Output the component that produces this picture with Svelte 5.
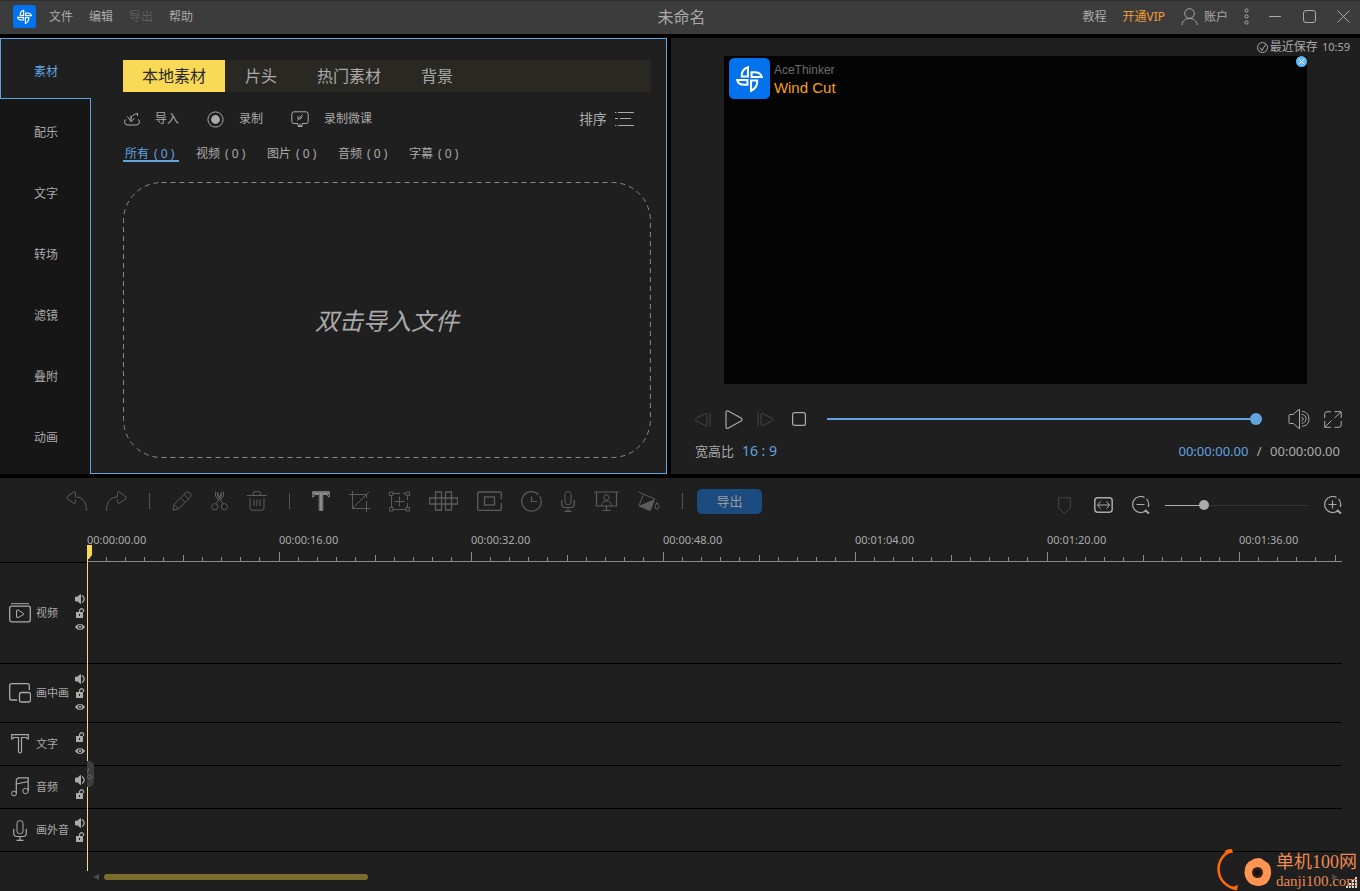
<script lang="ts">
  type Icon = { w: number; h: number; body: string };

  // Line icons, one unit per pixel. They take their colour from the text around them.
  const icons: Record<string, Icon> = {
    user: { w: 17, h: 17, body: '<circle cx="8.5" cy="5.5" r="4.8"/><path d="M.8 17C1.5 12.600 4.500 10.500 8.500 10.500S15.500 12.600 16.200 17"/>' },
    dots: { w: 5, h: 17, body: '<circle cx="2.500" cy="2.500" r="1.600"/><circle cx="2.500" cy="8.500" r="1.600"/><circle cx="2.500" cy="14.500" r="1.600"/>' },
    min: { w: 13, h: 13, body: '<path d="M0 6.500H12"/>' },
    max: { w: 13, h: 13, body: '<rect x=".5" y=".5" width="12" height="12" rx="2.500"/>' },
    close: { w: 13, h: 13, body: '<path d="M.5 .5L12.500 12.500M12.500 .5L.5 12.500"/>' },
    import: { w: 16, h: 14, body: '<path d="M1.500 7.500Q0 9 .8 11Q1 13 4 13H12Q15 13 15.200 11Q16 9 14.500 7.500"/><path d="M3.500 4.500L7 9.500L10.500 6.500M7 9.500C6.500 6 8 2 14 1.500M7 3.500V7M13.500 1.500V4"/>' },
    record: { w: 17, h: 17, body: '<circle cx="8.500" cy="8.500" r="7.600"/><circle cx="8.500" cy="8.500" r="4.400" fill="currentColor" stroke="none"/>' },
    screen: { w: 18, h: 17, body: '<path d="M7 12.500H3Q.8 12.500.8 10.500V3Q.8 .8 3 .8H15Q17.200 .8 17.200 3V10.500Q17.200 12.500 15 12.500H11"/><path d="M11.500 3.500L6.500 9.500M7 5V8M9 8.500L11 5.500M9 12.500V15.500M6 13.500L9 15.500L12 13.500M7 15.500H11.500"/>' },
    list: { w: 19, h: 14, body: '<path d="M3 .5H19M5 6.500H16M3 13.500H19M0 .5H1.500M0 6.500H3M0 13.500H1.500"/>' },
    saved: { w: 11, h: 11, body: '<circle cx="5.500" cy="5.500" r="5"/><path d="M3 5.500L5 8.500L8.500 2.500"/>' },
    prev: { w: 17, h: 15, body: '<path d="M11.500 1.500Q13 1 13 2.500V12.500Q13 14.500 11.500 13.800L1.500 8.500Q.3 7.500 1.500 6.500ZM16 .5V14.500"/>' },
    play: { w: 18, h: 19, body: '<path d="M1 2.500Q1 .3 3.200 1L16 8Q18 9.500 16 11L3.200 18.200Q1 19 1 16.500Z" stroke-width="1.200"/>' },
    next: { w: 17, h: 15, body: '<path d="M5.500 1.500Q4 1 4 2.500V12.500Q4 14.500 5.500 13.800L15.500 8.500Q16.700 7.500 15.500 6.500ZM1 .5V14.500"/>' },
    stop: { w: 14, h: 14, body: '<rect x=".6" y=".6" width="12.800" height="12.800" rx="2" stroke-width="1.200"/>' },
    volume: { w: 22, h: 20, body: '<path d="M1 6.500Q1 5.500 2 5.500H5L10 1.300Q11.500 .3 11.500 2V18Q11.500 19.700 10 18.700L5.500 14.500H2Q1 14.500 1 13.500ZM11.500 0V20"/><path d="M14 2.500C23 2 23.500 18 14 17M13.500 5.500C19.500 5 19.500 14.500 13.500 14.200M13.500 8Q17 10 13.500 12"/>' },
    full: { w: 18, h: 17, body: '<path d="M7 .7H3Q.7 .7.7 3V7M10.500 .7H17.200V7M17.200 10V14Q17.200 16.300 15 16.300H10.500M7 16.300H.7V10M17 1L10.500 7M7.500 9.500L1 16"/>' },
    undo: { w: 21, h: 20, body: '<path d="M9.500 6C16.500 6 20.500 11 20.500 19.500M9.500 5.500V2.500Q9.500 0 7.500 1L1 6Q.2 6.800 1 7.500L7.500 12.200Q9.500 13 9.500 10.500V8.500"/>' },
    redo: { w: 21, h: 20, body: '<path d="M11.500 6C4.500 6 .5 11 .5 19.500M11.500 5.500V2.500Q11.500 0 13.500 1L20 6Q20.800 6.800 20 7.500L13.500 12.200Q11.500 13 11.500 10.500V8.500"/>' },
    pencil: { w: 20, h: 20, body: '<path d="M1 19L2 13.500L13.500 1.800Q15.500 0 17.800 1.800Q20 4 18.500 6L6.500 17.800ZM12 3.500L16.800 8.200M2 13.500L6.500 17.800M9.500 7.500L12.500 10.500"/>' },
    cut: { w: 17, h: 20, body: '<circle cx="3.700" cy="15.700" r="3.100"/><circle cx="13.300" cy="15.700" r="3.100"/><path d="M5 12.800L10.500 5V1L8.500 7M12 12.800L6.500 5V1L8.500 7M4.500 .5V5L7.500 9M12.500 .5V5L9.500 9"/>' },
    trash: { w: 20, h: 20, body: '<path d="M0 4.500H20M6.500 4.500V2Q6.500 .7 8 .7H12Q13.500 .7 13.500 2V4.500M3 7V17Q3 19.200 5 19.200H15Q17 19.200 17 17V7M7 8.500V15M10 8.500V15M13 8.500V15"/>' },
    text: { w: 18, h: 20, body: '<path d="M.7 .7H17.300V6Q15.500 6 15.300 3.500H10.800V19.300H7.200V3.500H2.700Q2.500 6 .7 6Z"/><path d="M9 2V19M1 2.200H17" stroke-width="2"/>' },
    crop: { w: 21, h: 21, body: '<path d="M3.500 0V17.500H21M0 3.500H17.500V7M17.500 10V21M3.500 17.500L20 1"/>' },
    area: { w: 21, h: 21, body: '<path d="M.5 1H4V4.500H.5ZM17 1H20.500V4.500H17ZM.5 16.500H4V20H.5ZM17 16.500H20.500V20H17ZM4 2.500H11M14 2.500H17M2.500 4.500V16.500M4 18.500H17M18.500 4.500V9M18.500 12V16.500M10.500 5.500V15.500M5.500 10.500H15.500"/>' },
    mosaic: { w: 29, h: 20, body: '<path d="M6.500 1H12.500V19H6.500ZM16.500 1H22.500V19H16.500ZM.5 7H28.500V13H.5Z" stroke-width="1.300"/>' },
    frame: { w: 25, h: 20, body: '<path d="M24.300 8V2.500Q24.300 1 23 1H2Q.7 1 .7 2.500V18Q.7 19.300 2 19.300H23Q24.300 19.300 24.300 18V12" stroke-width="1.300"/><rect x="7.500" y="6" width="10" height="8" stroke-width="1.300"/>' },
    clock: { w: 21, h: 21, body: '<path d="M17.500 3.500A9.800 9.800 0 1 0 20.300 10.500Q20.300 7 18.800 5M10.500 5.500V10.500H16" stroke-width="1.200"/>' },
    mic: { w: 14, h: 21, body: '<rect x="4" y=".7" width="6" height="13" rx="2.500"/><path d="M.7 9V13Q.7 16.500 4 16.500H10Q13.300 16.500 13.300 13V9M7 16.500V20.300M3.500 20.300H10.500" stroke-width="1.200"/>' },
    present: { w: 25, h: 20, body: '<path d="M0 1H25M2.500 1V15H22.500V1M12.500 15V19M8.500 19.500H16.500" stroke-width="1.200"/><circle cx="12.500" cy="6.500" r="2.700"/><path d="M7.500 15Q8 10 12.500 10T17.500 15"/>' },
    bucket: { w: 22, h: 20, body: '<path d="M.5 1L17 8M5.500 3.500L.8 15L12 19.500L16.500 8"/><path d="M2 15L16 9L12.500 19Z" fill="currentColor"/><path d="M19 11.500Q16.500 15 17 17Q19 19.500 21 17Q21.500 15 19 11.500Z"/>' },
    marker: { w: 13, h: 17, body: '<path d="M.7 .7H12.300V11.500L6.500 16.300L.7 11.500Z"/>' },
    fit: { w: 19, h: 16, body: '<rect x=".8" y=".8" width="17.400" height="14.400" rx="3" stroke-width="1.500"/><path d="M3.500 8H15.500M6.500 4.500L3.500 8L6.500 11.500M12.500 4.500L15.500 8L12.500 11.500"/>' },
    zoomout: { w: 18, h: 18, body: '<path d="M12.500 1.500A8 8 0 1 0 14.500 14M14.500 2.800Q17.500 6 16.300 11M4.500 8.500H12.500" stroke-width="1.200"/><path d="M13 14L17 17.500" stroke-width="2"/>' },
    zoomin: { w: 18, h: 18, body: '<path d="M12.500 1.500A8 8 0 1 0 14.500 14M14.500 2.800Q17.500 6 16.300 11M4.500 8.500H12.500M8.500 4.500V12.500" stroke-width="1.200"/><path d="M13 14L17 17.500" stroke-width="2"/>' },
    trackVideo: { w: 22, h: 20, body: '<path d="M2 .7H20"/><rect x=".7" y="3.200" width="20.600" height="15.600" rx="2" stroke-width="1.300"/><path d="M7.500 8Q7.500 6.500 9 7L14 10Q15 11 14 12L9 14.500Q7.500 15 7.500 14Z"/>' },
    trackPip: { w: 22, h: 20, body: '<path d="M8 17H2.500Q.7 17 .7 15V2.500Q.7 .7 2.500 .7H18.500Q20.300 .7 20.300 2.500V7" stroke-width="1.300"/><rect x="10.500" y="9.500" width="11" height="9.500" rx="2" stroke-width="1.300"/>' },
    trackText: { w: 18, h: 20, body: '<path d="M.7 .7H17.300V5Q15.500 5 15.500 3.500H10.500V18Q9 20 7.500 18V3.500H2.500Q2.500 5 .7 5Z" stroke-width="1.200"/>' },
    trackAudio: { w: 18, h: 20, body: '<circle cx="3" cy="16.500" r="2.400"/><circle cx="14.500" cy="14" r="2.700"/><path d="M5.300 16.500V3.500Q5.500 1 8 .8H17.200V14M5.300 7L17.200 4.500" stroke-width="1.200"/>' },
    sound: { w: 10, h: 10, body: '<path d="M.5 3H2.500L5.500 .5V9.500L2.500 7H.5Z" fill="currentColor"/><path d="M7 1.500Q11.500 5 7 8.500" stroke-width="1.300"/>' },
    lock: { w: 10, h: 10, body: '<rect x="1" y="4" width="7" height="6" fill="currentColor" stroke="none"/><path d="M4.500 4.500V2.500Q6.500 -.8 8.500 2V4" stroke-width="1.300"/><path d="M4.500 6V8" stroke="#1f1f1f"/>' },
    eye: { w: 10, h: 10, body: '<path d="M0 5C2.500 1 7.500 1 10 5C7.500 9 2.500 9 0 5Z" fill="currentColor" stroke="none"/><circle cx="5" cy="5" r="1.700" fill="currentColor" stroke="#1f1f1f"/>' },
  };

  const sections = ['素材', '配乐', '文字', '转场', '滤镜', '叠附', '动画'];
  const sources = ['本地素材', '片头', '热门素材', '背景'];
  const filters = ['所有', '视频', '图片', '音频', '字幕'];

  const tools = [
    ['undo', '撤销'], ['redo', '重做'], ['|', ''],
    ['pencil', '编辑'], ['cut', '分割'], ['trash', '删除'], ['|', ''],
    ['text', '文字'], ['crop', '裁剪'], ['area', '缩放'], ['mosaic', '马赛克'],
    ['frame', '画中画'], ['clock', '时长'], ['mic', '录音'], ['present', '录制'],
    ['bucket', '颜色'], ['|', ''],
  ];

  const tracks = [
    { name: '视频', icon: 'trackVideo', size: 'tall', marks: ['sound', 'lock', 'eye'] },
    { name: '画中画', icon: 'trackPip', size: 'mid', marks: ['sound', 'lock', 'eye'] },
    { name: '文字', icon: 'trackText', size: '', marks: ['lock', 'eye'] },
    { name: '音频', icon: 'trackAudio', size: '', marks: ['sound', 'lock'] },
    { name: '画外音', icon: 'mic', size: '', marks: ['sound', 'lock'] },
  ];
  const markNames: Record<string, string> = { sound: '静音', lock: '锁定', eye: '显示' };

  // Ruler: a label every 16 seconds, ten ticks between two labels
  const SECTION = 192;
  const labels = ['00:00:00.00', '00:00:16.00', '00:00:32.00', '00:00:48.00', '00:01:04.00', '00:01:20.00', '00:01:36.00'];
  const ticks = Array.from({ length: 200 }, (_, i) => ({
    x: Math.floor((i * SECTION) / 10) + 0.5,
    top: i % 10 === 0 ? 28 : i % 5 === 0 ? 31 : 33,
  }));

  let section = $state(0);
  let source = $state(0);
  let filter = $state(0);
  let position = $state(100);
  let zoom = $state(25);
</script>

{#snippet icon(name: string)}
  {@const i = icons[name]}
  <svg class="icon" width={i.w} height={i.h} viewBox="0 0 {i.w} {i.h}" aria-hidden="true">{@html i.body}</svg>
{/snippet}

{#snippet logo(size: number)}
  <svg class="logo" width={size} height={size} viewBox="0 0 40 40" aria-hidden="true">
    <rect width="40" height="40" rx="5" fill="#0273ec" />
    <g fill="none" stroke="#fff" stroke-width="2">
      <path d="M18.500 18V9Q12 11 12.500 18Z" />
      <path d="M22 18.500V14Q31 13 32 18.500Z" />
      <path d="M18 21.500V26Q9 27 8 21.500Z" />
      <path d="M21.500 22V32Q28 29 27.500 22Z" />
    </g>
  </svg>
{/snippet}

<div class="app">
  <header class="titlebar">
    <nav class="menu">
      {@render logo(23)}
      <button>文件</button>
      <button>编辑</button>
      <button disabled>导出</button>
      <button>帮助</button>
    </nav>
    <h1>未命名</h1>
    <div class="window">
      <button>教程</button>
      <button class="vip">开通VIP</button>
      <button class="account">{@render icon('user')}账户</button>
      <button aria-label="更多">{@render icon('dots')}</button>
      <div class="controls">
        <button aria-label="最小化">{@render icon('min')}</button>
        <button aria-label="最大化">{@render icon('max')}</button>
        <button aria-label="关闭">{@render icon('close')}</button>
      </div>
    </div>
  </header>

  <div class="top">
    <section class="library">
      <nav class="sections">
        {#each sections as name, i}
          <button class:active={section === i} onclick={() => (section = i)}>{name}</button>
        {/each}
        <div class="rest"></div>
      </nav>

      <div class="media">
        <div class="sources">
          {#each sources as name, i}
            <button class:active={source === i} onclick={() => (source = i)}>{name}</button>
          {/each}
        </div>

        <div class="actions">
          <button>{@render icon('import')}导入</button>
          <button>{@render icon('record')}录制</button>
          <button>{@render icon('screen')}录制微课</button>
          <button class="sort">排序{@render icon('list')}</button>
        </div>

        <div class="filters">
          {#each filters as name, i}
            <button class:active={filter === i} onclick={() => (filter = i)}>{name} <span>( 0 )</span></button>
          {/each}
        </div>

        <button class="dropzone">
          <svg class="outline" aria-hidden="true"><rect x="0.5" y="0.5" rx="38" /></svg>
          双击导入文件
        </button>
      </div>
    </section>

    <section class="preview">
      <p class="saved">{@render icon('saved')}最近保存 <time>10:59</time></p>
      <div class="video">
        {@render logo(41)}
        <div class="brand">
          <span>AceThinker</span>
          <strong>Wind Cut</strong>
        </div>
        <button class="dismiss" aria-label="去除水印">
          <svg width="11" height="11" viewBox="0 0 11 11"><circle cx="5.500" cy="5.500" r="5.500" fill="#62b8f8" /><path d="M3 3L8 8M8 3L3 8" stroke="#fff" /></svg>
        </button>
      </div>

      <div class="player">
        <button class="dim" aria-label="上一帧">{@render icon('prev')}</button>
        <button aria-label="播放">{@render icon('play')}</button>
        <button class="dim" aria-label="下一帧">{@render icon('next')}</button>
        <button class="stop" aria-label="停止">{@render icon('stop')}</button>
        <input class="seek" type="range" aria-label="播放进度" bind:value={position} style="--fill: {position}%" />
        <button class="sound" aria-label="音量">{@render icon('volume')}</button>
        <button aria-label="全屏">{@render icon('full')}</button>
      </div>

      <div class="info">
        <span>宽高比</span>
        <button class="ratio">16 : 9</button>
        <span class="time"><b>00:00:00.00</b> <i>/</i> 00:00:00.00</span>
      </div>
    </section>
  </div>

  <section class="timeline">
    <div class="toolbar">
      <div class="tools">
        {#each tools as [name, title]}
          {#if name === '|'}
            <span class="sep"></span>
          {:else}
            <button class:bright={name === 'text'} aria-label={title}>{@render icon(name)}</button>
          {/if}
        {/each}
      </div>
      <button class="export">导出</button>

      <div class="scale">
        <button class="marker" aria-label="标记">{@render icon('marker')}</button>
        <button class="fit" aria-label="适应窗口">{@render icon('fit')}</button>
        <button aria-label="缩小">{@render icon('zoomout')}</button>
        <input class="zoom" type="range" aria-label="时间线缩放" bind:value={zoom} style="--fill: {zoom}%" />
        <button aria-label="放大">{@render icon('zoomin')}</button>
      </div>
    </div>

    <div class="board">
      <div class="ruler-row">
        <div class="corner"></div>
        <div class="ruler">
          <svg class="ticks" aria-hidden="true">
            {#each ticks as t}
              <line x1={t.x} x2={t.x} y1={t.top} y2="38" />
            {/each}
            <line x1="0" x2="100%" y1="37.5" y2="37.5" />
          </svg>
          <div class="labels">
            {#each labels as label}<span>{label}</span>{/each}
          </div>
        </div>
      </div>

      {#each tracks as track}
        <div class="track {track.size}">
          <span class="kind">{@render icon(track.icon)}</span>
          <span class="name">{track.name}</span>
          <div class="marks">
            {#each track.marks as mark}
              <button aria-label="{track.name}{markNames[mark]}">{@render icon(mark)}</button>
            {/each}
          </div>
        </div>
      {/each}

      <div class="playhead">
        <svg width="5" height="14" viewBox="0 0 5 14" aria-hidden="true"><path d="M0 0H5V10L2 14H0Z" fill="#f9d956" /></svg>
        <button class="splitter" aria-label="分割">
          <svg width="7" height="26" viewBox="0 0 7 26" fill="none" stroke="#666"><path d="M0 12L2 7" /><circle cx="2.500" cy="16" r="2" /></svg>
        </button>
      </div>
    </div>

    <div class="scroll">
      <svg width="6" height="6" viewBox="0 0 6 6" aria-hidden="true"><path d="M6 0V6L0 3Z" fill="#4a4a4a" /></svg>
      <div class="rail"><div class="bar"></div></div>
      <svg width="6" height="6" viewBox="0 0 6 6" aria-hidden="true"><path d="M0 0V6L6 3Z" fill="#4a4a4a" /></svg>
    </div>
  </section>

  <aside class="site">
    <svg width="64" height="42" viewBox="0 0 64 42" aria-hidden="true">
      <path d="M20 1.500A19.500 19.500 0 0 0 25 39.500" fill="none" stroke="#ff6a0a" stroke-width="2.500" />
      <path d="M12 3Q16 -1 20 .5L21 3.500Q16 5 12 3ZM17 38Q22 38 26 36L25 41Q21 42 17 38Z" fill="#ff6a0a" />
      <path d="M44 9.500Q48 8 52 11.500Q60 15 59 25Q57 37 46 37Q34 36 32.500 24Q32 14 41 10.500Q42 9 44 9.500Z" fill="#ff9550" />
      <circle cx="45.500" cy="23.500" r="5.500" fill="#32201a" />
      <circle cx="45.500" cy="23.500" r="3" fill="#15110f" />
    </svg>
    <div class="site-name">
      <span>单机100网</span>
      <small>danji100.com</small>
    </div>
    <svg class="grip" width="12" height="12" viewBox="0 0 12 12" fill="#d8d8d8" aria-hidden="true">
      <path d="M9 0h2v2h-2zM6 3h2v2h-2zM9 3h2v2h-2zM3 6h2v2h-2zM6 6h2v2h-2zM9 6h2v2h-2zM0 9h2v2h-2zM3 9h2v2h-2zM6 9h2v2h-2zM9 9h2v2h-2z" />
    </svg>
  </aside>
</div>

<style>
  :global(body) {
    margin: 0;
    background: #000;
  }

  .app {
    position: relative;
    display: flex;
    flex-direction: column;
    gap: 4px;
    min-height: 100vh;
    overflow: hidden;
    color: #aaa;
    font: 12px/16px "Noto Sans", "Noto Sans CJK SC", sans-serif;
  }

  button {
    display: flex;
    align-items: center;
    justify-content: center;
    flex: none;
    margin: 0;
    padding: 0;
    border: 0;
    background: none;
    color: inherit;
    font: inherit;
    white-space: nowrap;
    cursor: pointer;
  }

  svg {
    display: block;
    flex: none;
  }
  .icon {
    fill: none;
    stroke: currentColor;
  }

  /* --- Title bar --- */
  .titlebar {
    display: grid;
    grid-template-columns: 1fr auto 1fr;
    align-items: center;
    box-sizing: border-box;
    height: 34px;
    padding: 0 10px 2px 13px;
    border-top: 1px solid #2f2f2f;
    background: #3c3c3c;
  }
  .menu { display: flex; align-items: center; gap: 16px; }
  .menu .logo { margin-right: -3px; }
  .menu button:disabled { color: #5c5c5c; }
  h1 {
    margin: 0;
    font-size: 16px;
    line-height: 24px;
    font-weight: 400;
  }
  .window { display: flex; align-items: center; justify-content: flex-end; gap: 16px; }
  .vip { color: #f09c38; }
  .account { gap: 6px; }
  .controls { display: flex; gap: 21px; margin-left: 4px; }

  /* --- Library --- */
  .top {
    display: grid;
    grid-template-columns: minmax(0, 30fr) minmax(0, 31fr);
    gap: 4px;
  }
  .library { display: flex; background: #1f1f1f; }
  .sections {
    display: flex;
    flex-direction: column;
    flex: none;
    width: 91px;
  }
  .sections button,
  .rest {
    box-sizing: border-box;
    height: 61px;
    padding: 6px 0 0 2px;
    border-right: 1px solid #62a3e0;
    background: #161616;
  }
  .sections .active {
    border: 1px solid #62a3e0;
    border-right: 0;
    padding-left: 0;
    background: #1f1f1f;
    color: #62a3e0;
  }
  .rest { flex: 1; height: auto; }
  .media {
    display: flex;
    flex-direction: column;
    flex: 1;
    min-width: 0;
    padding: 21px 15px 15px 32px;
    border: 1px solid #62a3e0;
    border-left: 0;
  }
  .sources {
    display: flex;
    height: 32px;
    background: #292823;
    font-size: 16px;
  }
  .sources button { padding: 0 20px; }
  .sources .active {
    padding: 0 19px;
    background: #f9d956;
    color: #2b2b2b;
  }
  .actions {
    display: flex;
    align-items: center;
    gap: 28px;
    height: 54px;
    padding: 0 17px 0 1px;
  }
  .actions button { gap: 15px; }
  .actions .sort {
    gap: 8px;
    margin-left: auto;
    font-size: 14px;
  }
  .filters { display: flex; gap: 15px; height: 16px; margin-bottom: 20px; }
  .filters button {
    box-sizing: border-box;
    justify-content: flex-start;
    gap: 5px;
    width: 56px;
    padding: 2px 0 0 2px;
    border-bottom: 2px solid transparent;
  }
  .filters .active { border-color: #62a3e0; color: #62a3e0; }
  .dropzone {
    position: relative;
    flex: 1;
    padding-top: 2px;
    font-size: 24px;
    font-style: italic;
  }
  .outline { position: absolute; inset: 0; width: 100%; height: 100%; }
  .outline rect {
    width: calc(100% - 1px);
    height: calc(100% - 1px);
    fill: none;
    stroke: #8a8a8a;
    stroke-dasharray: 5 4;
  }

  /* --- Preview --- */
  .preview { background: #1f1f1f; }
  .saved {
    display: flex;
    align-items: center;
    justify-content: flex-end;
    gap: 2px;
    height: 18px;
    margin: 0;
    padding-right: 10px;
  }
  .saved time { margin-left: 2px; font-size: 11px; }
  .video {
    position: relative;
    display: flex;
    align-items: flex-start;
    gap: 4px;
    box-sizing: border-box;
    margin: 0 53px;
    padding: 2px 5px;
    aspect-ratio: 16 / 9;
    background: #040404;
  }
  .brand {
    display: flex;
    flex-direction: column;
    padding-top: 4px;
    color: #6c6c6c;
    font: 12px/16px "Liberation Sans", Arial, sans-serif;
  }
  .brand strong {
    color: #f7a10c;
    font-size: 15px;
    line-height: 20px;
    font-weight: 400;
  }
  .dismiss { position: absolute; top: 0; right: 0; }
  .player {
    display: flex;
    align-items: center;
    gap: 14px;
    height: 36px;
    margin-top: 17px;
    padding: 0 18px 0 23px;
  }
  .player .dim { color: #444; }
  .player .stop { margin-left: 4px; }
  .player .sound { margin-left: 12px; }
  .info {
    display: flex;
    align-items: center;
    gap: 8px;
    height: 28px;
    padding: 0 20px 9px 24px;
    font-size: 13px;
  }
  .ratio { color: #62a3e0; font-size: 14px; }
  .time { margin-left: auto; }
  .time b { color: #62a3e0; font-weight: 400; }
  .time i { margin: 0 5px; font-style: normal; }

  /* --- Sliders --- */
  input[type="range"] {
    appearance: none;
    height: 12px;
    margin: 0;
    background: none;
  }
  input::-webkit-slider-runnable-track {
    height: 1px;
    background: linear-gradient(to right, #aaa var(--fill), #333 var(--fill));
  }
  input::-webkit-slider-thumb {
    appearance: none;
    width: 10px;
    height: 10px;
    margin-top: -5px;
    border-radius: 50%;
    background: #aaa;
  }
  .player .seek { flex: 1; min-width: 0; margin-left: 7px; }
  .seek::-webkit-slider-runnable-track {
    height: 2px;
    background: linear-gradient(to right, #62a3e0 var(--fill), #333 var(--fill));
  }
  .seek::-webkit-slider-thumb { width: 12px; height: 12px; background: #62a3e0; }
  .zoom { width: 144px; }

  /* --- Timeline --- */
  .timeline {
    display: flex;
    flex-direction: column;
    flex: 1;
    background: #1f1f1f;
  }
  .toolbar { display: flex; align-items: center; height: 46px; padding: 0 18px 0 66px; }
  .tools { display: flex; align-items: center; gap: 19px; color: #5c5c5c; }
  .tools .bright { color: #8c8c8c; }
  .sep { width: 1px; height: 16px; margin: 0 3px; background: #555; }
  .export {
    width: 65px;
    height: 25px;
    margin-left: 11px;
    border-radius: 5px;
    background: #1c4b80;
    color: #999;
    font-size: 13px;
  }
  .scale {
    display: flex;
    align-items: center;
    gap: 15px;
    margin-left: auto;
    padding-top: 8px;
  }
  .marker { margin-right: 8px; color: #444; }
  .fit { margin-right: 4px; }

  .board { position: relative; padding-right: 18px; }
  .ruler-row { display: flex; height: 39px; }
  .corner {
    box-sizing: border-box;
    flex: none;
    width: 87px;
    border-bottom: 1px solid #000;
  }
  .ruler { position: relative; flex: 1; min-width: 0; overflow: hidden; }
  .ticks { position: absolute; inset: 0; width: 100%; height: 100%; stroke: #8a8a8a; }
  .labels { display: flex; padding-top: 8px; font-size: 11px; }
  .labels span { flex: none; width: 192px; }

  .track {
    display: flex;
    align-items: center;
    box-sizing: border-box;
    height: 43px;
    padding-left: 9px;
    border-bottom: 1px solid #000;
    font-size: 11px;
  }
  .track.tall { height: 101px; }
  .track.mid { height: 59px; }
  .kind { display: flex; justify-content: center; width: 22px; }
  .name { width: 39px; margin-left: 5px; }
  .marks { display: flex; flex-direction: column; gap: 4px; }

  .playhead {
    position: absolute;
    top: 21px;
    bottom: -19px;
    left: 87px;
    border-left: 1px solid #f5dc83;
  }
  .playhead > svg { margin-left: -1px; }
  .splitter {
    position: absolute;
    top: 216px;
    left: -1px;
    border-radius: 0 5px 5px 0;
    background: #3d3d3d;
  }

  .scroll {
    display: flex;
    align-items: center;
    gap: 5px;
    padding: 22px 22px 11px 93px;
  }
  .rail { flex: 1; }
  .bar { width: 264px; height: 6px; border-radius: 3px; background: #7c6c2e; }

  /* --- Site mark --- */
  .site {
    position: absolute;
    right: 2px;
    bottom: 0;
    display: flex;
    color: #ec8a52;
    font: 15px/18px "Liberation Serif", "Noto Sans CJK SC", serif;
  }
  .site-name { display: flex; flex-direction: column; padding-top: 3px; }
  .site-name span { font-size: 18px; line-height: 20px; }
  .site-name small { font-size: 15px; }
  .grip { position: absolute; right: 0; bottom: 2px; }
</style>
